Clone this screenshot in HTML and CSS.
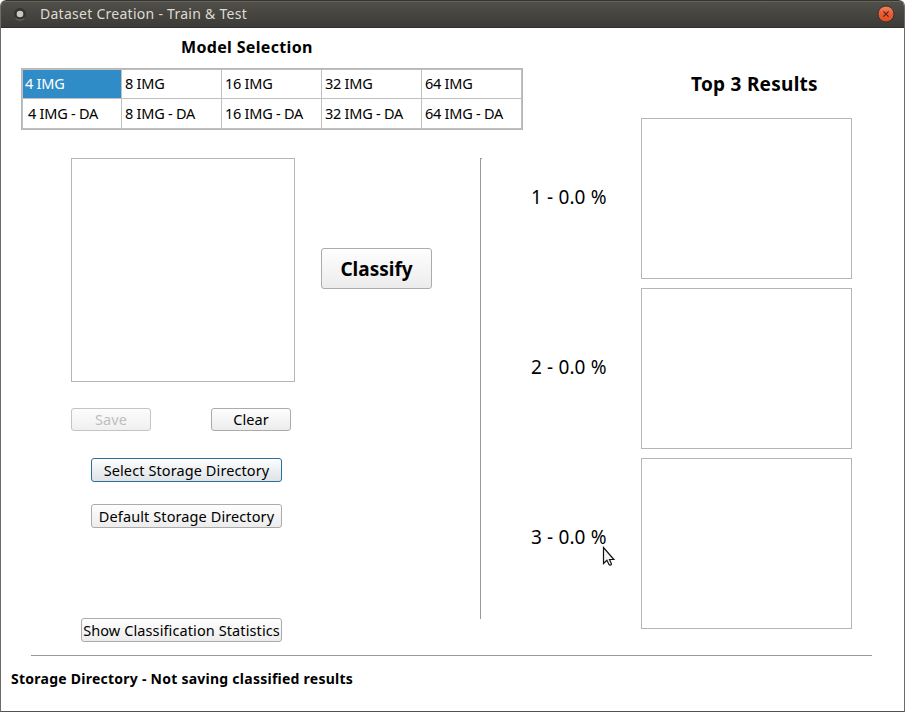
FILE: index.html
```html
<!DOCTYPE html>
<html lang="en">
<head>
<meta charset="utf-8">
<title>Dataset Creation - Train &amp; Test</title>
<link rel="stylesheet" href="styles.css">
</head>
<body>
<div class="window">
  <header class="titlebar">
    <svg class="app-icon" width="14" height="14" viewBox="0 0 14 14"><circle cx="7" cy="7" r="6" fill="#35342f"/><path d="M2.6 11.3a6.1 6.1 0 0 0 8.8 0" fill="none" stroke="#77756e"/><circle cx="7" cy="7" r="3.3" fill="#c9c7c2"/></svg>
    <span class="title">Dataset Creation - Train &amp; Test</span>
    <svg class="close" width="18" height="18" viewBox="0 0 18 18"><defs><linearGradient id="g" x2="0" y2="1"><stop stop-color="#f58362"/><stop offset=".5" stop-color="#ed5b33"/><stop offset="1" stop-color="#e04d20"/></linearGradient></defs><circle cx="9" cy="9" r="8" fill="url(#g)" stroke="#35332e"/><path d="M6.4 6.4l5.2 5.2M11.6 6.4l-5.2 5.2" stroke="#4a2a1e" stroke-width="1.2"/></svg>
  </header>
  <main class="content">
    <section class="left">
      <h2 class="heading"><span>Model Selection</span></h2>
      <div class="models">
        <div class="cell selected">4 IMG</div><div class="cell">8 IMG</div><div class="cell">16 IMG</div><div class="cell">32 IMG</div><div class="cell">64 IMG</div>
        <div class="cell indent">4 IMG - DA</div><div class="cell">8 IMG - DA</div><div class="cell">16 IMG - DA</div><div class="cell">32 IMG - DA</div><div class="cell">64 IMG - DA</div>
      </div>
      <div class="work">
        <div class="tools">
          <div class="row">
            <div class="preview"></div>
            <button class="btn classify"><span>Classify</span></button>
          </div>
          <div class="row actions">
            <button class="btn small" disabled>Save</button>
            <button class="btn small">Clear</button>
          </div>
          <button class="btn wide hover">Select Storage Directory</button>
          <button class="btn wide default">Default Storage Directory</button>
          <button class="btn stats">Show Classification Statistics</button>
        </div>
        <div class="divider"></div>
      </div>
    </section>
    <section class="right">
      <h2 class="results-title"><span>Top 3 Results</span></h2>
      <div class="result"><span class="score">1 - 0.0 %</span><div class="thumb"></div></div>
      <div class="result"><span class="score">2 - 0.0 %</span><div class="thumb"></div></div>
      <div class="result last"><span class="score">3 - 0.0 %</span><div class="thumb"></div></div>
    </section>
  </main>
  <footer class="status"><span>Storage Directory - Not saving classified results</span></footer>
  <svg class="cursor" width="14" height="21" viewBox="0 0 14 21"><path d="M1.5 1.5v16l3.4-3.2 2.2 4.4c.7 1 2.7.2 2.2-1.1l-1.8-4.1h4.4z" fill="#f4f4f4" stroke="#111" stroke-width="1.2"/></svg>
</div>
</body>
</html>
```
FILE: styles.css
```css
* { box-sizing: border-box; }
body { margin: 0; background: #fff; font: 14.5px/20px "Noto Sans", sans-serif; color: #000; }
.window { position: relative; width: 905px; height: 712px; border: 1px solid #706c68; border-top: 0; border-bottom-color: #55514e; border-radius: 6px 6px 0 0; background: #fff; overflow: hidden; white-space: nowrap; }
.titlebar { height: 28px; margin: 0 -1px; padding: 0 10px 0 13px; display: flex; align-items: center; background: linear-gradient(#504f49, #3c3b37); border-top: 1px solid #35342f; border-bottom: 1px solid #2f2e2a; box-shadow: inset 0 1px #66655e; border-radius: 6px 6px 0 0; }
.title { margin-left: 13px; font-size: 14px; letter-spacing: .27px; color: #dfdbd2; }
.close { margin-left: auto; }
.content { display: flex; height: 600px; }
.left { width: 530px; }
.heading { margin: 9px 0 11px 180px; font-size: 16px; line-height: 20px; letter-spacing: .33px; }
.models { width: 502px; height: 62px; margin-left: 20px; display: grid; grid-template-columns: repeat(5, 100px); grid-template-rows: 30px 30px; border: 1px solid #b5b5b5; box-shadow: inset 0 0 0 1px #c0c0c0; letter-spacing: -.25px; }
.cell { padding: 4px 0 0 3px; border-right: 1px solid #c0c0c0; border-bottom: 1px solid #c0c0c0; }
.cell.selected { background: #308cc6; color: #fff; margin: 1px 0 0 1px; padding: 3px 0 0 2px; }
.cell.indent { padding-left: 6px; }
.work { display: flex; margin-top: 28px; }
.tools { width: 479px; padding-left: 70px; }
.row { display: flex; }
.preview { width: 224px; height: 224px; border: 1px solid #b5b5b5; }
.btn { display: flex; align-items: center; justify-content: center; padding: 0; font: inherit; letter-spacing: .1px; color: #000; background: linear-gradient(#fefefe, #ececec); border: 1px solid #ababab; border-radius: 3px; white-space: nowrap; }
.classify { width: 111px; height: 41px; margin: 90px 0 0 26px; font-size: 19px; font-weight: 700; letter-spacing: 0; }
.actions { margin-top: 26px; gap: 60px; }
.small { width: 80px; height: 23px; padding-bottom: 2px; }
.btn:disabled { color: #bebebe; border-color: #c4c4c4; background: linear-gradient(#fcfcfc, #f0f0f0); }
.wide { width: 191px; height: 24px; margin: 27px 0 0 20px; }
.hover { border-color: #2e6f9a; background: linear-gradient(#fdfefe, #dde3e8); }
.default { margin-top: 22px; }
.stats { width: 201px; height: 24px; margin: 90px 0 0 10px; }
.divider { width: 2px; height: 461px; border-left: 1px solid #999; border-top: 1px solid #999; }
.right { width: 321px; padding-top: 46px; }
.results-title { margin: 0 0 24px 160px; font-size: 19px; line-height: 20px; letter-spacing: .27px; }
.result { display: flex; align-items: center; justify-content: space-between; height: 161px; margin-bottom: 9px; }
.score { font-size: 19px; line-height: 20px; margin-bottom: 3px; letter-spacing: .13px; }
.thumb { width: 211px; height: 161px; border: 1px solid #b5b5b5; }
.last .thumb { height: 171px; margin-bottom: -10px; }
.status { margin: 27px 32px 0 30px; border-top: 1px solid #999; padding-top: 13px; font-size: 14px; font-weight: 700; letter-spacing: .25px; }
.status span { margin-left: -20px; }
.cursor { position: absolute; left: 601px; top: 546px; }
```
